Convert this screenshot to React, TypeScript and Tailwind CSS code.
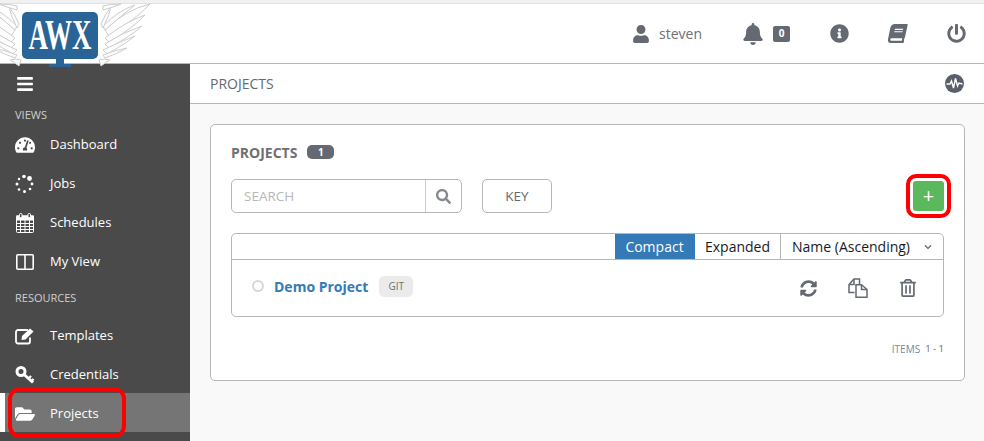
import {
  FaBars,
  FaBell,
  FaBook,
  FaChevronDown,
  FaFolderOpen,
  FaInfoCircle,
  FaPowerOff,
  FaRegTrashAlt,
  FaSearch,
  FaSyncAlt,
  FaTachometerAlt,
  FaUser,
} from "react-icons/fa";
import type { ComponentType } from "react";

function JobsIcon() {
  return (
    <svg width="20" height="20" viewBox="0 0 20 20" fill="#fff">
      <circle cx="9" cy="2.5" r="1.8" />
      <circle cx="14.5" cy="4.5" r="2.4" />
      <circle cx="17" cy="10" r="1.4" />
      <circle cx="15" cy="15" r="1.3" />
      <circle cx="9.5" cy="17.5" r="1.5" />
      <circle cx="4" cy="15.5" r="1.3" />
      <circle cx="2" cy="10" r="1.5" />
      <circle cx="4" cy="5" r="1.2" />
    </svg>
  );
}

function CalendarIcon() {
  return (
    <svg width="18" height="20" viewBox="0 0 18 20" fill="none" stroke="#fff">
      <rect x="0.5" y="3" width="17" height="16.5" rx="1" strokeWidth="1" />
      <rect x="0.5" y="3" width="17" height="4" fill="#fff" />
      <rect x="3.5" y="0.5" width="2.5" height="4" rx="1" fill="#4a4a4a" strokeWidth="1" />
      <rect x="12" y="0.5" width="2.5" height="4" rx="1" fill="#4a4a4a" strokeWidth="1" />
      <path d="M0.5 10.5H17.5M0.5 13.5H17.5M0.5 16.5H17.5M4.5 7V19M9 7V19M13.5 7V19" strokeWidth="1" />
    </svg>
  );
}

function ColumnsIcon() {
  return (
    <svg width="18" height="16" viewBox="0 0 18 16" fill="none" stroke="#fff" strokeWidth="1.6">
      <rect x="0.8" y="0.8" width="16.4" height="14.4" rx="1" />
      <path d="M9 1V15" />
    </svg>
  );
}

function EditIcon() {
  return (
    <svg width="20" height="18" viewBox="0 0 20 18" fill="none">
      <path
        d="M15 10.5V14.5A2 2 0 0 1 13 16.5H3A2 2 0 0 1 1 14.5V5A2 2 0 0 1 3 3H13"
        stroke="#fff"
        strokeWidth="1.8"
      />
      <path d="M7 9L15 1.5L18.5 4.5L10.5 12.5L6.5 13Z" fill="#fff" />
    </svg>
  );
}

function KeyIcon() {
  return (
    <svg width="20" height="20" viewBox="0 0 20 20" fill="none" stroke="#fff">
      <circle cx="6" cy="6.5" r="4" strokeWidth="3" />
      <path d="M9 9.5L18 17.5" strokeWidth="3" />
      <path d="M13.5 13.5L16 11M16.5 16L18.5 14" strokeWidth="2.4" />
    </svg>
  );
}

function FolderIcon() {
  return <FaFolderOpen className="text-[20px]" />;
}

function DashIcon() {
  return <FaTachometerAlt className="text-[20px]" />;
}

function CopyIcon() {
  return (
    <svg width="20" height="20" viewBox="0 0 20 20" fill="none" stroke="#646972" strokeWidth="1.5">
      <path d="M6.5 14.5H1V6.5L6 1H11.5V6" />
      <path d="M6 1V6.5H1" />
      <path d="M8 19.2V6.8H13.5L19 11.5V19.2Z" />
      <path d="M13.5 6.8V11.5H19" />
    </svg>
  );
}

const views = [
  { label: "Dashboard", icon: DashIcon },
  { label: "Jobs", icon: JobsIcon },
  { label: "Schedules", icon: CalendarIcon },
  { label: "My View", icon: ColumnsIcon },
];

const resources = [
  { label: "Templates", icon: EditIcon },
  { label: "Credentials", icon: KeyIcon },
  { label: "Projects", icon: FolderIcon, active: true },
];

// feather tips, from the top of the wing to the bottom
const feathers = [
  "M8 6 Q14 4 26 4 Q16 8 8 10Z",
  "M10 30 Q30 10 55 4 Q42 18 14 36Z",
  "M8 26 Q24 10 40 5 Q26 16 10 30Z",
  "M10 38 Q30 22 50 15 Q38 28 14 42Z",
  "M10 44 Q28 32 47 26 Q36 36 14 48Z",
  "M8 50 Q24 42 40 36 Q30 44 12 54Z",
  "M8 55 Q20 50 32 48 Q22 54 10 58Z",
  "M4 60 Q10 58 15 60 Q10 63 6 66Z",
  "M6 24 Q10 14 16 7 Q14 16 8 28Z",
];

function Wing({ className }: { className: string }) {
  return (
    <svg width="60" height="68" viewBox="0 0 60 68" className={className} fill="#fdfdfd" stroke="#cdcdcd" strokeWidth="1">
      {feathers.map((d) => (
        <path key={d} d={d} />
      ))}
    </svg>
  );
}

function Logo() {
  return (
    <div className="absolute left-0 top-0 h-[68px] w-[155px] overflow-hidden">
      <Wing className="absolute left-[-35px] top-0 -scale-x-100" />
      <Wing className="absolute left-[95px] top-0" />
      <div className="absolute left-[22px] top-3 flex h-[47px] w-[76px] items-center justify-center rounded-[5px] bg-[#2a6496]">
        <span className="scale-y-[1.6] font-['Liberation_Serif',serif] text-[27px] font-bold leading-none text-white">
          AWX
        </span>
      </div>
      <div className="absolute left-[56px] top-[59px] h-[6px] w-2 bg-[#2a6496]" />
      <div className="absolute left-[49px] top-[64px] h-[3px] w-[22px] bg-[#2a6496]" />
    </div>
  );
}

function NavItem({
  label,
  icon: Icon,
  active,
  low,
}: {
  label: string;
  icon: ComponentType;
  active?: boolean;
  low?: boolean;
}) {
  return (
    <div
      className={`flex h-[39px] items-center text-[13px] text-white ${
        active ? "border-l-[5px] border-white bg-[#757575]" : ""
      } ${low ? "pt-[2px]" : ""}`}
    >
      <span className={`flex justify-center ${active ? "w-[45px] pr-[5px]" : "w-[50px]"}`}>
        <Icon />
      </span>
      <span>{label}</span>
    </div>
  );
}

export default function App() {
  return (
    <div className="relative flex h-[441px] w-[984px] flex-col overflow-hidden bg-[#f9f9f9] font-['Open_Sans',sans-serif]">
      <div className="h-[4px] shrink-0 border-b border-[#e2e2e2] bg-[#f1f1f1]" />

      <header className="flex h-[60px] shrink-0 items-center justify-end border-b border-[#b7b7b7] bg-white pr-[18px] text-[#646972]">
        <FaUser className="text-[18px]" />
        <span className="ml-[9px] text-[14px] text-[#707070]">steven</span>
        <FaBell className="ml-[40px] text-[22px]" />
        <span className="ml-[9px] flex h-4 w-[17px] items-center justify-center rounded-[2px] bg-[#646972] text-[10px] font-bold text-white">
          0
        </span>
        <FaInfoCircle className="ml-[40px] text-[19px]" />
        <FaBook className="ml-[39px] -skew-x-12 text-[19px]" />
        <FaPowerOff className="ml-[40px] text-[19px]" />
      </header>

      <div className="flex min-h-0 flex-1">
        <nav className="w-[190px] shrink-0 bg-[#4a4a4a]">
          <div className="flex h-[40px] items-center pl-4 text-white">
            <FaBars className="text-[18px]" />
          </div>
          <div className="flex h-[21px] items-center pl-[15px] pt-[1px] text-[11px] text-[#d0d0d0]">VIEWS</div>
          {views.map((item) => (
            <NavItem key={item.label} {...item} />
          ))}
          <div className="flex h-[34px] items-center pl-[15px] text-[11px] text-[#d0d0d0]">RESOURCES</div>
          {resources.map((item) => (
            <NavItem key={item.label} {...item} low />
          ))}
        </nav>

        <main className="min-w-0 flex-1">
          <div className="flex h-[40px] items-center justify-between border-b border-[#b7b7b7] bg-white pl-5 pr-[20px]">
            <span className="text-[14px] text-[#646972]">PROJECTS</span>
            <svg width="19" height="19" viewBox="0 0 19 19">
              <circle cx="9.5" cy="9.5" r="9.5" fill="#5a5f69" />
              <path
                d="M1.5 10 H5 L6.5 7 L8.5 14 L10.5 4.5 L12.5 12 L14 9 L17.5 10"
                fill="none"
                stroke="#fff"
                strokeWidth="1.4"
              />
            </svg>
          </div>

          <section className="ml-5 mr-[19px] mt-5 h-[257px] rounded-[5px] border border-[#b7b7b7] bg-white px-5 pt-[19px]">
            <div className="flex h-[16px] items-center">
              <span className="text-[14px] font-bold text-[#707070]">PROJECTS</span>
              <span className="ml-[10px] flex h-[14px] w-[27px] items-center justify-center rounded-[5px] bg-[#646972] text-[10px] font-bold text-white">
                1
              </span>
            </div>

            <div className="mt-[19px] flex items-center">
              <div className="flex h-[34px] w-[231px] rounded-[5px] border border-[#b7b7b7]">
                <span className="flex flex-1 items-center pl-3 text-[13.5px] text-[#b7b7b7]">SEARCH</span>
                <span className="flex w-9 items-center justify-center border-l border-[#cccccc] text-[#848992]">
                  <FaSearch className="text-[15px]" />
                </span>
              </div>
              <button className="ml-5 h-[34px] w-[70px] rounded-[5px] border border-[#b7b7b7] bg-white text-[13.5px] text-[#646972]">
                KEY
              </button>
              <button className="ml-auto flex h-[30px] w-[31px] items-center justify-center rounded-[3px] bg-[#5cb85c] text-[20px] leading-none text-white">
                +
              </button>
            </div>

            <div className="mt-[20px] rounded-[5px] border border-[#b7b7b7]">
              <div className="flex h-[26px] justify-end border-b border-[#b7b7b7] text-[14px]">
                <span className="flex w-[80px] items-center justify-center bg-[#337ab7] pr-[1px] text-white">
                  Compact
                </span>
                <span className="flex w-[86px] items-center justify-center border-r border-[#b7b7b7] text-[#161b1f]">
                  Expanded
                </span>
                <span className="flex w-[162px] items-center pl-[11px] text-[#161b1f]">
                  Name (Ascending)
                  <FaChevronDown className="ml-[14px] text-[8px] text-[#646972]" />
                </span>
              </div>
              <div className="flex h-[56px] items-center pl-5 pr-[26px]">
                <span className="mb-[4px] h-3 w-3 rounded-full border-2 border-[#d7d7d7]" />
                <span className="mb-[4px] ml-[10px] text-[14px] font-bold text-[#337ab7]">Demo Project</span>
                <span className="mb-[4px] ml-[11px] flex h-[21px] w-[34px] items-center justify-center rounded-[5px] bg-[#ebebeb] text-[10px] text-[#707070]">
                  GIT
                </span>
                <span className="ml-auto flex items-center text-[#646972]">
                  <FaSyncAlt className="text-[17px]" />
                  <span className="ml-[31px]">
                    <CopyIcon />
                  </span>
                  <FaRegTrashAlt className="ml-[31px] text-[18px]" />
                </span>
              </div>
            </div>

            <div className="mt-[25px] flex items-center justify-end text-[#6d8ba6]">
              <span className="text-[10px]">ITEMS</span>
              <span className="ml-[5px] text-[9.5px] text-[#646972]">1 - 1</span>
            </div>
          </section>
        </main>
      </div>

      <Logo />

      {/* red annotations drawn over the screenshot */}
      <div className="absolute left-[8px] top-[387px] h-[51px] w-[118px] rounded-[12px] border-[4px] border-[#ff0000]" />
      <div className="absolute left-[906px] top-[174px] h-[44px] w-[45px] rounded-[10px] border-[4px] border-[#ff0000]" />
    </div>
  );
}
